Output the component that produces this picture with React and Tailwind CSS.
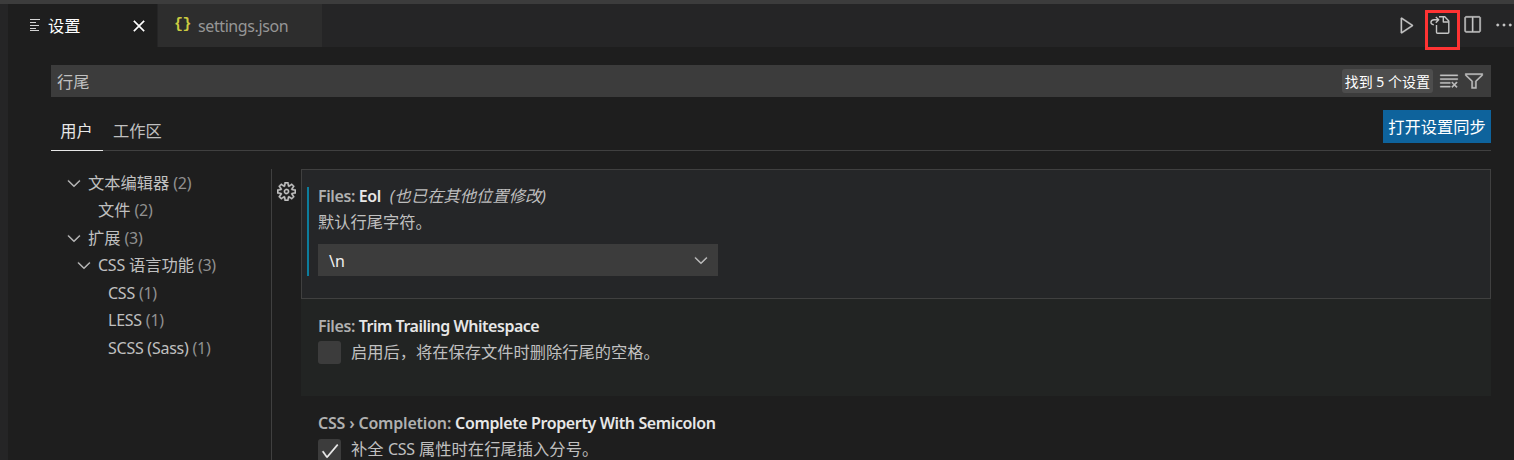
import {
  VscPlay,
  VscSplitHorizontal,
  VscEllipsis,
  VscClearAll,
  VscFilter,
  VscSettingsGear,
  VscChevronDown,
  VscClose,
  VscCheck,
} from "react-icons/vsc";

const toc = [
  { label: "文本编辑器", count: 2, pad: "pl-[13px]", open: true },
  { label: "文件", count: 2, pad: "pl-[47px]" },
  { label: "扩展", count: 3, pad: "pl-[13px]", open: true },
  { latin: "CSS", label: "语言功能", count: 3, pad: "pl-[23px]", open: true },
  { latin: "CSS", count: 1, pad: "pl-[57px]" },
  { latin: "LESS", count: 1, pad: "pl-[57px]" },
  { latin: "SCSS (Sass)", count: 1, pad: "pl-[57px]" },
];

function OpenFileIcon() {
  return (
    <svg width="20" height="20" viewBox="0 0 20 20" fill="none" stroke="currentColor" strokeWidth="1.4" strokeLinejoin="round" className="shrink-0">
      <path d="M6.5 10v7.200a1 1 0 0 0 1 1h10.300a1 1 0 0 0 1-1V6l-4-4.200H9" />
      <path d="M13.300 2v5h5.200" />
      <path d="M3.800 9.800C1.600 9.600.8 8.300 1 7c.3-1.500 1.500-2.200 3-2.200h4.300M5.800 2l2.900 2.800-2.900 2.900" />
    </svg>
  );
}

function TabBar() {
  return (
    <div className="flex h-[43px] shrink-0 bg-[#252526]">
      <div className="flex w-[149px] items-center bg-[#1e1e1e] pl-[21px] text-white">
        <svg width="13" height="14" viewBox="0 0 13 14" className="mt-[-1px] text-[#d4d4d4]" stroke="currentColor" strokeWidth="1.2">
          <path d="M1 1.5h10M1 4.5h6M1 7.5h9M1 10.5h6M1 12.500h9" />
        </svg>
        <span className="mt-[2px] ml-[6px] leading-none">设置</span>
        <VscClose size={20} stroke="currentColor" strokeWidth={0.4} className="ml-[48px]" />
      </div>
      <div className="ml-px flex w-[164px] items-center bg-[#2d2d2d] pl-[16px]">
        <span className="w-[16px] pb-[2px] text-center font-['Liberation_Mono',monospace] text-[15px] leading-none font-bold tracking-[-0.5px] text-[#cbcb41]">{"{}"}</span>
        <span className="mt-px ml-[8px] text-[16px] tracking-[-0.4px] text-[#969696]">settings.json</span>
      </div>
      <div className="ml-auto flex items-start text-[#c5c5c5]">
        <VscPlay size={20} stroke="currentColor" strokeWidth={0.3} className="mt-[11px] mr-[-1px] ml-px" />
        <div className="ml-[9px] flex h-10 w-[35px] translate-y-[6px] border-[3px] border-[#ff3333] pt-[2px] pl-[2px]">
          <OpenFileIcon />
        </div>
        <VscSplitHorizontal size={20} stroke="currentColor" strokeWidth={0.3} className="mt-[11px] ml-[2px]" />
        <VscEllipsis size={20} stroke="currentColor" strokeWidth={0.3} className="mt-[11px] ml-[12px]" />
      </div>
    </div>
  );
}

function SettingTitle({ category, name, note, categoryClass, nameClass }) {
  return (
    <div className="flex h-[26px] items-center text-[16px] font-semibold whitespace-pre text-[#e7e7e7]">
      <span className={`text-[#b0b0b0] ${categoryClass}`}>{category} </span>
      <span className={nameClass}>{name}</span>
      {note && <span className="ml-[9px] text-[16.25px] font-normal tracking-[0.05px] text-[#bdbdbd] italic">{note}</span>}
    </div>
  );
}

function Checkbox({ checked }) {
  return (
    <div className="flex size-[23px] shrink-0 items-center justify-center rounded-[3px] bg-[#3c3c3c] text-[#f0f0f0]">
      {checked && <VscCheck size={20} stroke="currentColor" strokeWidth={0.4} />}
    </div>
  );
}

export default function App() {
  return (
    <div className="flex h-[460px] w-[1514px] flex-col overflow-hidden bg-[#1e1e1e] font-['Noto_Sans','Noto_Sans_CJK_SC',sans-serif] text-[16.25px] whitespace-nowrap text-[#c0c0c0]">
      <div className="h-1 shrink-0 bg-[#3c3c3c]" />
      <div className="flex min-h-0 flex-1">
        <div className="w-2 shrink-0 bg-[#252526]" />
        <div className="flex min-w-0 flex-1 flex-col">
          <TabBar />
          <div className="flex min-h-0 flex-1 flex-col pt-[18px] pr-[23px] pl-[43px]">
            <div className="flex h-8 shrink-0 items-center bg-[#3c3c3c] pr-[7px] pl-[6px]">
              <span className="mt-[2px]">行尾</span>
              <span className="ml-auto flex h-6 items-center rounded-[3px] bg-[#4d4d4d] px-[3px] text-[14px] text-white">
                找到 5 个设置
              </span>
              <VscClearAll size={20} stroke="currentColor" strokeWidth={0.3} className="ml-[6px]" />
              <VscFilter size={20} stroke="currentColor" strokeWidth={0.3} className="ml-[5px]" />
            </div>
            <div className="flex h-[54px] shrink-0 border-b border-[#404040] pt-[13px]">
              <div className="flex h-[41px] w-[52px] items-center justify-center border-b border-[#e7e7e7] pt-[2px] pr-px text-[#e7e7e7]">用户</div>
              <div className="ml-[10px] flex h-[41px] items-center pt-px">工作区</div>
              <div className="ml-auto flex h-[33px] w-[108px] items-center justify-center bg-[#0e639c] pt-[2px] text-white">打开设置同步</div>
            </div>
            <div className="flex min-h-0 flex-1 pt-[18px]">
              <div className="w-[221px] shrink-0 border-r border-[#404040]">
                {toc.map((row, i) => (
                  <div key={i} className={`flex h-[27.5px] items-center ${row.pad}`}>
                    {row.open && <VscChevronDown size={20} stroke="currentColor" strokeWidth={0.3} className="mr-[4px] shrink-0" />}
                    {row.latin && <span className="text-[16px] tracking-[-0.25px]">{row.latin}</span>}
                    {row.label && <span className={row.latin ? "ml-[4px]" : ""}>{row.label}</span>}
                    <span className="ml-[4px] text-[16px] tracking-[-0.3px] text-[#909090]">({row.count})</span>
                  </div>
                ))}
              </div>
              <VscSettingsGear size={19} stroke="currentColor" strokeWidth={0.4} className="mt-[13px] mr-px ml-[5px] shrink-0" />
              <div className="ml-1 flex flex-1 flex-col">
                <div className="flex h-[130px] shrink-0 border border-[#404040] bg-[#252628] pt-[17px] pl-[5px]">
                  <div className="h-[89px] border-l-2 border-[#0c7d9d] pl-[9px]">
                    <div className="mt-[-4px]">
                      <SettingTitle category="Files:" name="Eol" note="(也已在其他位置修改)" categoryClass="tracking-[-0.4px]" nameClass="tracking-[-0.4px]" />
                    </div>
                    <div className="flex h-[26px] items-center">默认行尾字符。</div>
                    <div className="mt-[9px] flex h-8 w-[400px] items-center justify-between bg-[#3c3c3c] pr-[7px] pl-[11px] text-[#f0f0f0]">
                      <span className="pt-[2px] text-[16px]">\n</span>
                      <VscChevronDown size={20} stroke="currentColor" strokeWidth={0.3} className="text-[#c5c5c5]" />
                    </div>
                  </div>
                </div>
                <div className="h-[97px] shrink-0 bg-[#222423] pt-[14px] pl-[17px]">
                  <SettingTitle category="Files:" name="Trim Trailing Whitespace" categoryClass="tracking-[-0.4px]" nameClass="tracking-[-0.48px]" />
                  <div className="mt-[2px] flex items-center gap-[10px]">
                    <Checkbox />
                    <span className="leading-[23px]">启用后，将在保存文件时删除行尾的空格。</span>
                  </div>
                </div>
                <div className="h-[97px] shrink-0 pt-[14px] pl-[17px]">
                  <SettingTitle category="CSS › Completion:" name="Complete Property With Semicolon" categoryClass="tracking-[-0.2px]" nameClass="tracking-[-0.38px]" />
                  <div className="mt-[3px] flex items-center gap-[10px]">
                    <Checkbox checked />
                    <span className="mt-[-3px] leading-[23px] tracking-[0.05px]">
                      补全 <span className="text-[16px] tracking-[-0.3px]">CSS</span> 属性时在行尾插入分号。
                    </span>
                  </div>
                </div>
              </div>
            </div>
          </div>
        </div>
      </div>
    </div>
  );
}
